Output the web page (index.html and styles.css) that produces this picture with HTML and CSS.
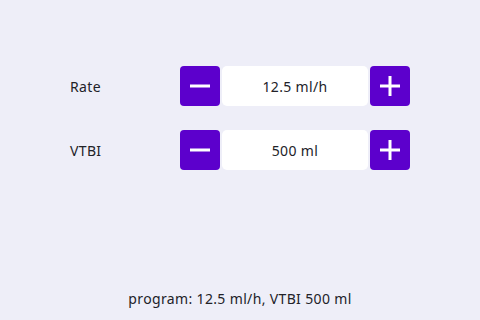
FILE: index.html
```html
<!DOCTYPE html>
<html>
<head>
<meta charset="utf-8">
<link rel="stylesheet" href="styles.css">
</head>
<body>
<div class="app">
  <div class="rows">
    <div class="row">
      <span class="label">Rate</span>
      <div class="stepper">
        <button class="btn"><svg width="20" height="20" viewBox="0 0 20 20"><rect x="0" y="8.5" width="20" height="3" fill="#fff"/></svg></button>
        <div class="value">12.5 ml/h</div>
        <button class="btn"><svg width="20" height="20" viewBox="0 0 20 20"><rect x="0" y="8.5" width="20" height="3" fill="#fff"/><rect x="8.5" y="0" width="3" height="20" fill="#fff"/></svg></button>
      </div>
    </div>
    <div class="row">
      <span class="label">VTBI</span>
      <div class="stepper">
        <button class="btn"><svg width="20" height="20" viewBox="0 0 20 20"><rect x="0" y="8.5" width="20" height="3" fill="#fff"/></svg></button>
        <div class="value">500 ml</div>
        <button class="btn"><svg width="20" height="20" viewBox="0 0 20 20"><rect x="0" y="8.5" width="20" height="3" fill="#fff"/><rect x="8.5" y="0" width="3" height="20" fill="#fff"/></svg></button>
      </div>
    </div>
  </div>
  <div class="footer">program: 12.5 ml/h, VTBI 500 ml</div>
</div>
</body>
</html>
```
FILE: styles.css
```css
html, body {
  margin: 0;
  padding: 0;
  background: #eeeef8;
}
.app {
  width: 480px;
  height: 320px;
  box-sizing: border-box;
  display: flex;
  flex-direction: column;
  font-family: "Noto Sans", "Open Sans", sans-serif;
  color: #222228;
  font-size: 14px;
  letter-spacing: 0.35px;
  padding-top: 66px;
}
.rows {
  display: flex;
  flex-direction: column;
  gap: 24px;
  padding-left: 70px;
}
.row {
  display: flex;
  align-items: center;
  height: 40px;
}
.label {
  width: 110px;
}
.stepper {
  display: flex;
  gap: 2px;
  height: 40px;
}
.btn {
  width: 40px;
  height: 40px;
  border: 0;
  padding: 0;
  margin: 0;
  background: #5c00cc;
  border-radius: 4px;
  display: flex;
  align-items: center;
  justify-content: center;
}
.btn svg {
  display: block;
}
.value {
  width: 146px;
  background: #ffffff;
  border-radius: 5px;
  display: flex;
  align-items: center;
  justify-content: center;
}
.footer {
  margin-top: auto;
  text-align: center;
  padding-bottom: 13px;
  line-height: 16px;
}
```
